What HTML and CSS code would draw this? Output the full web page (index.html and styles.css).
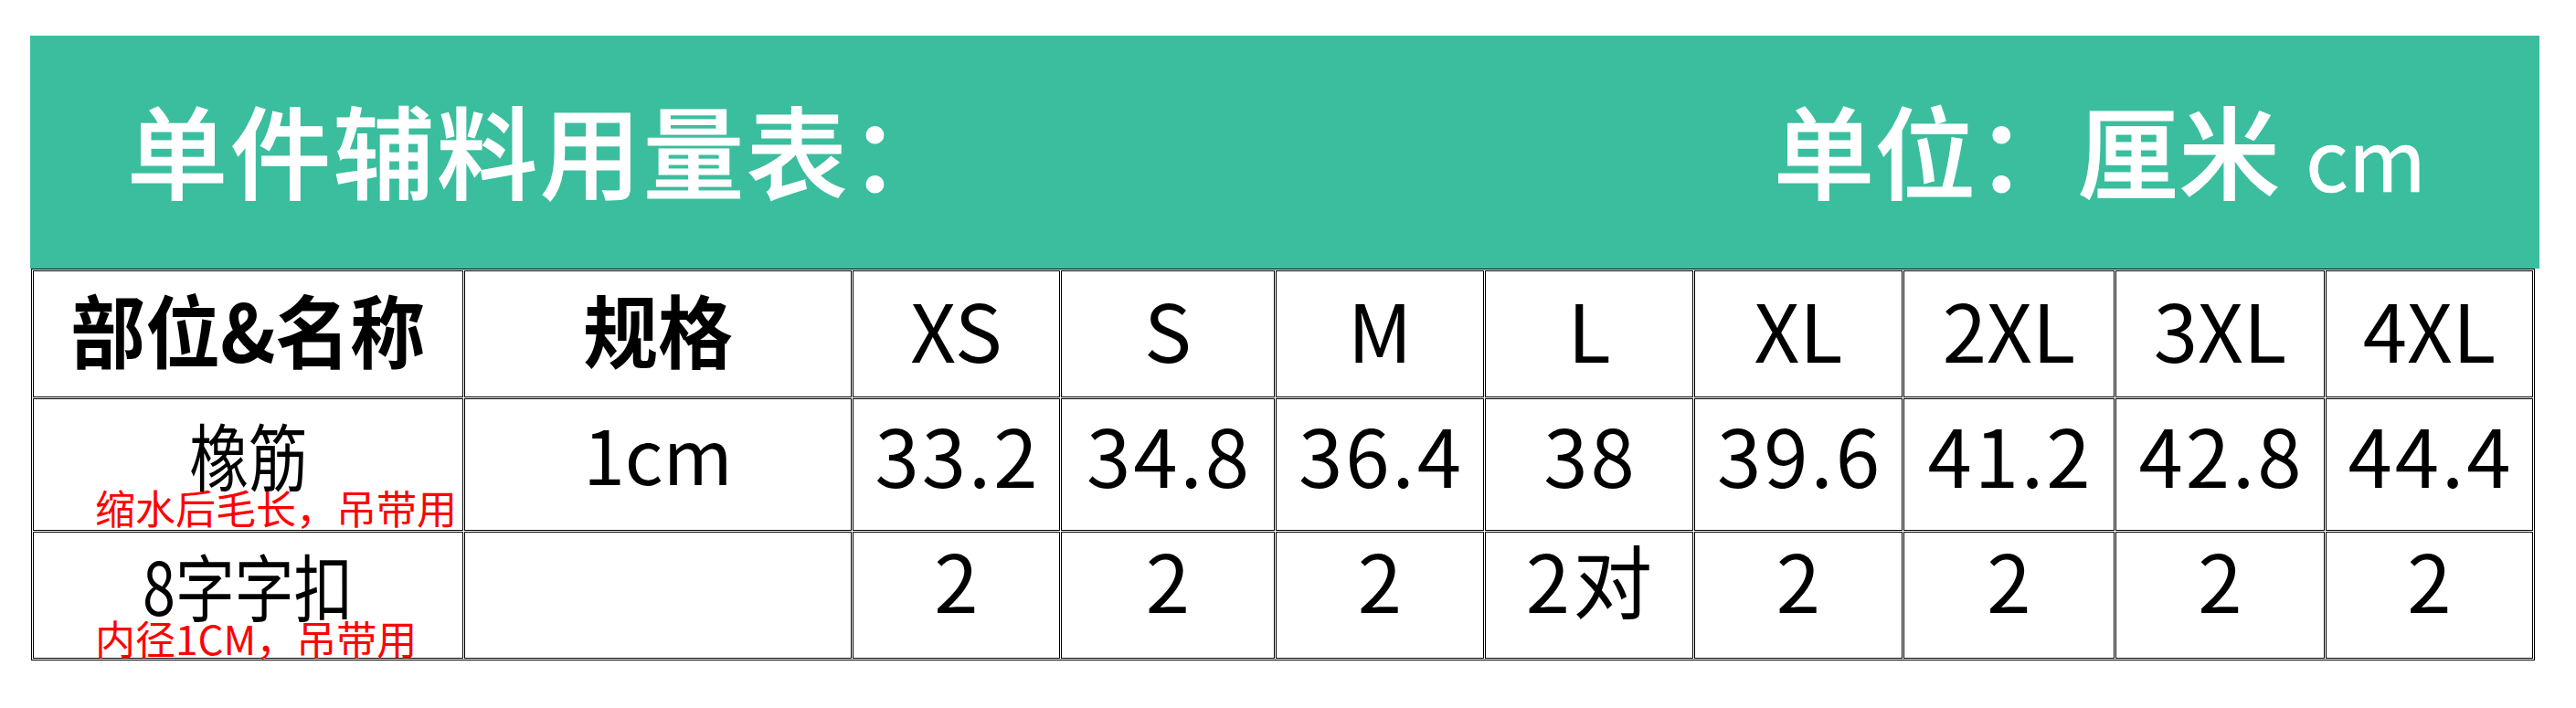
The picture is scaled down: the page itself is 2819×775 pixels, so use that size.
FILE: index.html
```html
<!DOCTYPE html>
<html lang="zh-CN">
<head>
<meta charset="utf-8">
<title>单件辅料用量表</title>
<link rel="stylesheet" href="styles.css">
</head>
<body>
<div class="sheet">
  <div class="banner">
    <div class="banner-title">单件辅料用量表：</div>
    <div class="banner-unit">单位：厘米<span class="unit-cm">cm</span></div>
  </div>
  <div class="grid" role="table">
    <div class="cell head strong" role="columnheader"><span class="tight">部位&amp;名称</span></div>
    <div class="cell head strong" role="columnheader"><span class="tight">规格</span></div>
    <div class="cell head" role="columnheader">XS</div>
    <div class="cell head" role="columnheader">S</div>
    <div class="cell head" role="columnheader">M</div>
    <div class="cell head" role="columnheader">L</div>
    <div class="cell head" role="columnheader">XL</div>
    <div class="cell head" role="columnheader">2XL</div>
    <div class="cell head" role="columnheader">3XL</div>
    <div class="cell head" role="columnheader">4XL</div>

    <div class="cell name-cell row-a" role="cell">
      <div class="name"><span class="narrow">橡筋</span></div>
      <div class="note">缩水后毛长，吊带用</div>
    </div>
    <div class="cell spec row-a" role="cell">1cm</div>
    <div class="cell val row-a" role="cell">33.2</div>
    <div class="cell val row-a" role="cell">34.8</div>
    <div class="cell val row-a" role="cell">36.4</div>
    <div class="cell val row-a" role="cell">38</div>
    <div class="cell val row-a" role="cell">39.6</div>
    <div class="cell val row-a" role="cell">41.2</div>
    <div class="cell val row-a" role="cell">42.8</div>
    <div class="cell val row-a" role="cell">44.4</div>

    <div class="cell name-cell row-b" role="cell">
      <div class="name"><span class="narrow">8字字扣</span></div>
      <div class="note">内径1CM，吊带用</div>
    </div>
    <div class="cell spec row-b" role="cell"></div>
    <div class="cell val row-b" role="cell">2</div>
    <div class="cell val row-b" role="cell">2</div>
    <div class="cell val row-b" role="cell">2</div>
    <div class="cell val row-b" role="cell">2对</div>
    <div class="cell val row-b" role="cell">2</div>
    <div class="cell val row-b" role="cell">2</div>
    <div class="cell val row-b" role="cell">2</div>
    <div class="cell val row-b" role="cell">2</div>
  </div>
</div>
</body>
</html>
```

FILE: styles.css
```css
* {
  box-sizing: border-box;
}

html,
body {
  margin: 0;
  padding: 0;
  background: #ffffff;
}

body {
  font-family: "Noto Sans CJK SC", "Noto Sans", sans-serif;
  color: #000000;
}

.sheet {
  width: 2746px;
  margin: 39px 0 0 33px;
}

.banner {
  height: 255px;
  background: #3abe9e;
  color: #ffffff;
  display: flex;
  align-items: center;
  justify-content: space-between;
  padding: 0 124px 10px 106px;
  font-size: 110px;
  line-height: 1;
  font-weight: 500;
  -webkit-text-stroke: 1.2px #ffffff;
}

.banner-title {
  letter-spacing: 3px;
}

.banner-unit {
  letter-spacing: 1px;
}

.unit-cm {
  font-size: 92px;
  font-weight: 400;
  margin-left: 27px;
  letter-spacing: 0;
  -webkit-text-stroke: 0.6px #ffffff;
}

.grid {
  width: 2740px;
  margin-left: 1px;
  border: 1px solid #000000;
  padding: 1px;
  display: grid;
  grid-template-columns: 471px 424px 227px 234px 228px 228px 228px 231px 229px 227px;
  grid-template-rows: 139px 145px 139px;
  gap: 1px;
}

.cell {
  border: 1px solid #000000;
  text-align: center;
  font-size: 87px;
  line-height: 87px;
  white-space: nowrap;
  overflow: visible;
}

.head {
  padding-top: 19px;
}

.strong {
  font-weight: 700;
}

.tight {
  display: inline-block;
  transform: scaleX(0.94);
}

.val {
  letter-spacing: 3px;
  text-indent: 3px;
}

.row-a.val {
  padding-top: 16px;
}

.row-a.spec {
  padding-top: 18px;
  font-size: 82px;
  line-height: 82px;
}

.row-b.val {
  padding-top: 7px;
}

.name-cell.row-a {
  padding-top: 19px;
}

.name-cell.row-b {
  padding-top: 16px;
}

.name {
  font-size: 80px;
  line-height: 80px;
}

.narrow {
  display: inline-block;
  transform: scaleX(0.81);
}

.note {
  color: #ff0000;
  font-size: 44px;
  line-height: 38px;
  text-align: left;
  padding-left: 67px;
}
```
